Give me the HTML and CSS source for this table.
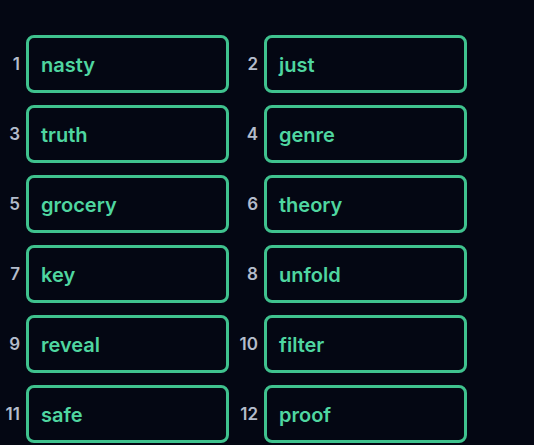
FILE: index.html
```html
<!DOCTYPE html>
<html>
<head>
<meta charset="utf-8">
<link rel="stylesheet" href="styles.css">
</head>
<body>
<div class="grid">
  <div class="item"><span class="num">1</span><div class="box">nasty</div></div>
  <div class="item"><span class="num">2</span><div class="box">just</div></div>
  <div class="item"><span class="num">3</span><div class="box">truth</div></div>
  <div class="item"><span class="num">4</span><div class="box">genre</div></div>
  <div class="item"><span class="num">5</span><div class="box">grocery</div></div>
  <div class="item"><span class="num">6</span><div class="box">theory</div></div>
  <div class="item"><span class="num">7</span><div class="box">key</div></div>
  <div class="item"><span class="num">8</span><div class="box">unfold</div></div>
  <div class="item"><span class="num">9</span><div class="box">reveal</div></div>
  <div class="item"><span class="num">10</span><div class="box">filter</div></div>
  <div class="item"><span class="num">11</span><div class="box">safe</div></div>
  <div class="item"><span class="num">12</span><div class="box">proof</div></div>
</div>
</body>
</html>
```
FILE: styles.css
```css
html, body {
  margin: 0;
  background: #040713;
}
body {
  font-family: "Inter", "Noto Sans", sans-serif;
  padding: 35px 0 0 0;
}
.grid {
  display: grid;
  grid-template-columns: 229px 229px;
  column-gap: 9px;
  row-gap: 12px;
}
.item {
  display: flex;
  align-items: center;
  gap: 6px;
}
.num {
  width: 20px;
  text-align: right;
  color: #b4bccb;
  font-size: 17px;
  font-weight: 600;
}
.box {
  box-sizing: border-box;
  width: 203px;
  height: 58px;
  border: 3px solid #3fc28e;
  border-radius: 8px;
  display: flex;
  align-items: center;
  padding: 2px 0 0 12px;
  color: #4fd6a0;
  font-size: 20px;
  font-weight: 600;
}
```
